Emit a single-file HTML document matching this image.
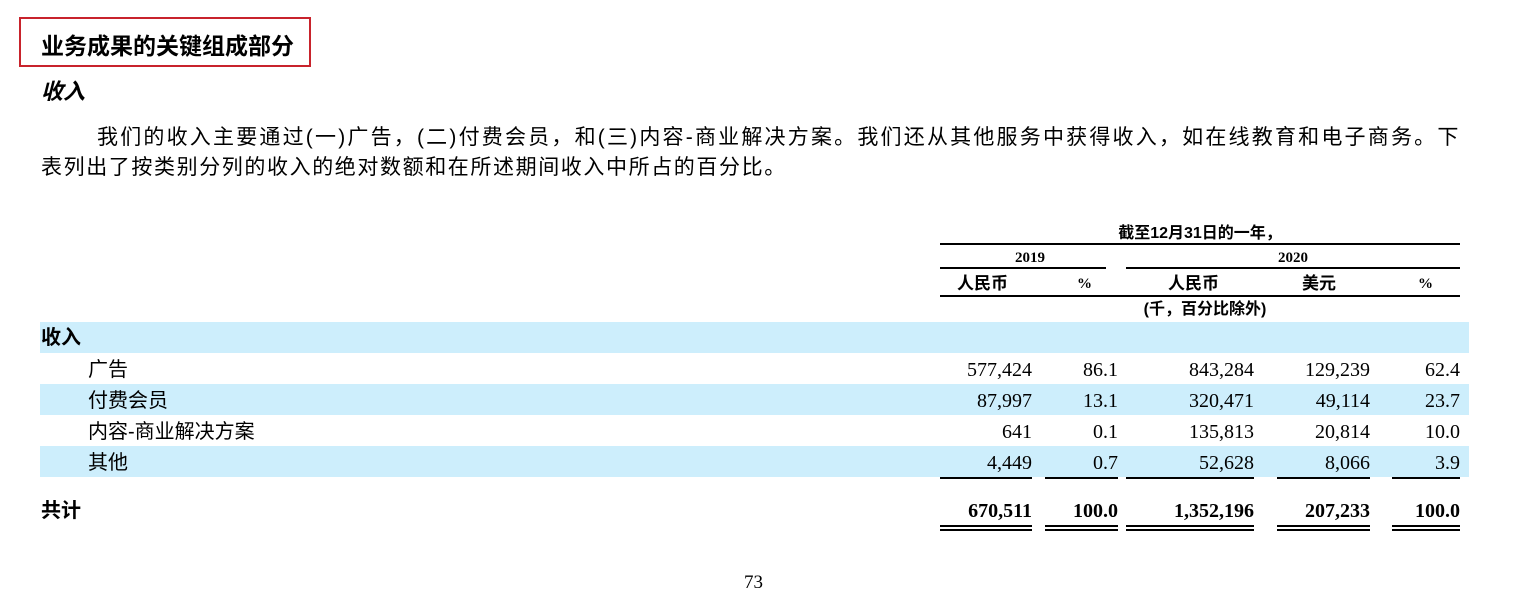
<!DOCTYPE html>
<html><head><meta charset="utf-8"><style>
body{margin:0;width:1516px;height:598px;background:#fff;position:relative;overflow:hidden;font-family:"Liberation Sans","Noto Sans CJK SC",sans-serif;color:#000}
.a{position:absolute;white-space:nowrap}
.s{font-family:"Liberation Serif","Noto Sans CJK SC",serif}
.r{text-align:right}
.c{text-align:center}
.ln{position:absolute;height:2px;background:#000}
.blue{position:absolute;left:40px;width:1429px;height:31px;background:#cdeefc}
.num{position:absolute;font-family:"Liberation Serif",serif;font-size:20px;text-align:right;white-space:nowrap}
.b{font-weight:bold}
</style></head><body>
<div style="position:absolute;left:19px;top:17px;width:288px;height:46px;border:2px solid #c8232c"></div>
<div class="a b" style="left:41px;top:31px;font-size:23px;line-height:30px">业务成果的关键组成部分</div>
<div class="a b" style="left:41px;top:78px;font-size:22px;font-style:italic;line-height:28px">收入</div>
<div class="a" style="left:97px;top:124px;font-size:21px;line-height:28px;letter-spacing:2.2px">我们的收入主要通过(一)广告，(二)付费会员，和(三)内容-商业解决方案。我们还从其他服务中获得收入，如在线教育和电子商务。下</div>
<div class="a" style="left:41px;top:154px;font-size:21px;line-height:28px;letter-spacing:1.6px">表列出了按类别分列的收入的绝对数额和在所述期间收入中所占的百分比。</div>

<div class="a b c" style="left:940px;width:520px;top:224px;font-size:16px;line-height:20px">截至12月31日的一年，</div>
<div class="ln" style="left:940px;width:520px;top:243px"></div>
<div class="a b c s" style="left:940px;width:180px;top:249px;font-size:15px;line-height:18px">2019</div>
<div class="a b c s" style="left:1126px;width:334px;top:249px;font-size:15px;line-height:18px">2020</div>
<div class="ln" style="left:940px;width:166px;top:267px"></div>
<div class="ln" style="left:1126px;width:334px;top:267px"></div>
<div class="a b" style="left:957px;top:273px;font-size:17px;line-height:22px">人民币</div>
<div class="a b s" style="left:1077px;top:274px;font-size:15px;line-height:20px">%</div>
<div class="a b" style="left:1168px;top:273px;font-size:17px;line-height:22px">人民币</div>
<div class="a b" style="left:1302px;top:273px;font-size:17px;line-height:22px">美元</div>
<div class="a b s" style="left:1418px;top:274px;font-size:15px;line-height:20px">%</div>
<div class="ln" style="left:940px;width:520px;top:295px"></div>
<div class="a b c" style="left:1126px;width:158px;top:300px;font-size:16px;line-height:20px">(千，百分比除外)</div>

<div class="blue" style="top:322px"></div>
<div class="blue" style="top:384px"></div>
<div class="blue" style="top:446px"></div>
<div class="a b" style="left:41px;top:325px;font-size:20px;line-height:26px">收入</div>
<div class="a" style="left:88px;top:357px;font-size:20px;line-height:26px">广告</div>
<div class="a" style="left:88px;top:388px;font-size:20px;line-height:26px">付费会员</div>
<div class="a" style="left:88px;top:419px;font-size:20px;line-height:26px">内容-商业解决方案</div>
<div class="a" style="left:88px;top:450px;font-size:20px;line-height:26px">其他</div>
<div class="a b" style="left:41px;top:498px;font-size:20px;line-height:26px">共计</div>

<div id="rows"></div>
<script>
var cols=[[940,1032],[1045,1118],[1126,1254],[1277,1370],[1392,1460]];
var data=[[358,["577,424","86.1","843,284","129,239","62.4"]],[389,["87,997","13.1","320,471","49,114","23.7"]],[420,["641","0.1","135,813","20,814","10.0"]],[451,["4,449","0.7","52,628","8,066","3.9"]]];
var h="";
data.forEach(function(d){d[1].forEach(function(v,i){h+='<div class="num" style="left:'+cols[i][0]+'px;width:'+(cols[i][1]-cols[i][0])+'px;top:'+d[0]+'px;line-height:24px">'+v+'</div>';});});
var tot=["670,511","100.0","1,352,196","207,233","100.0"];
tot.forEach(function(v,i){var c=cols[i];
h+='<div class="num b" style="left:'+c[0]+'px;width:'+(c[1]-c[0])+'px;top:499px;line-height:24px">'+v+'</div>';
h+='<div class="ln" style="left:'+c[0]+'px;width:'+(c[1]-c[0])+'px;top:477px"></div>';
h+='<div class="ln" style="left:'+c[0]+'px;width:'+(c[1]-c[0])+'px;top:525px"></div>';
h+='<div class="ln" style="left:'+c[0]+'px;width:'+(c[1]-c[0])+'px;top:529px"></div>';});
document.getElementById("rows").innerHTML=h;
</script>
<div class="a s" style="left:744px;top:572px;font-size:19px;line-height:22px">73</div>
</body></html>
